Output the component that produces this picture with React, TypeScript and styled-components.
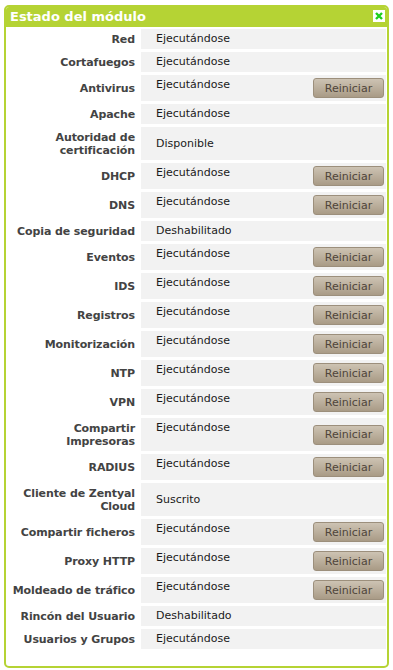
import React from "react";
import styled, { createGlobalStyle } from "styled-components";

const GlobalStyle = createGlobalStyle`
  body {
    margin: 0;
    background: #ffffff;
    font-family: "DejaVu Sans", Verdana, sans-serif;
  }
`;

const lime = "#b5d334";

const Panel = styled.div`
  margin: 5px 4px 0 4px;
  width: 385px;
  height: 663px;
  box-sizing: border-box;
  border: 2px solid ${lime};
  border-radius: 5px;
  overflow: hidden;
  background: #ffffff;
`;

const Header = styled.div`
  display: flex;
  align-items: center;
  justify-content: space-between;
  height: 20px;
  margin-top: -2px;
  padding: 1px 2px 1px 4px;
  background: ${lime};
  color: #ffffff;
  font-weight: bold;
  font-size: 13px;
`;

const CloseBox = styled.span`
  display: flex;
  align-items: center;
  justify-content: center;
  width: 12px;
  height: 12px;
  background: #ffffff;
`;

const Grid = styled.div`
  display: grid;
  grid-template-columns: 129px 1fr;
  column-gap: 4px;
  row-gap: 3px;
  padding: 2px 1px 0 2px;
`;

const Label = styled.div`
  display: flex;
  align-items: center;
  justify-content: flex-end;
  text-align: right;
  padding: 3.5px 2px 3.5px 0;
  font-size: 11px;
  line-height: 13px;
  letter-spacing: -0.1px;
  font-weight: bold;
  color: #434343;
`;

const Value = styled.div`
  display: flex;
  align-items: center;
  justify-content: space-between;
  padding: 3px 2px 3px 15px;
  background: #f2f2f2;
  font-size: 11px;
  line-height: 14px;
  color: #1a1a1a;
`;

const Status = styled.span<{ $top: boolean }>`
  align-self: ${(p) => (p.$top ? "flex-start" : "center")};
`;

const RestartBtn = styled.button`
  width: 71px;
  height: 20px;
  padding: 0;
  border: 1px solid #9c8f7c;
  border-radius: 3px;
  background: linear-gradient(#cdc3b3, #a99b86);
  color: #4f453a;
  font-family: "DejaVu Sans", Verdana, sans-serif;
  font-size: 11px;
`;

type Mod = { name: React.ReactNode; status: string; restart?: boolean };

const modules: Mod[] = [
  { name: "Red", status: "Ejecutándose" },
  { name: "Cortafuegos", status: "Ejecutándose" },
  { name: "Antivirus", status: "Ejecutándose", restart: true },
  { name: "Apache", status: "Ejecutándose" },
  { name: <>Autoridad de<br />certificación</>, status: "Disponible" },
  { name: "DHCP", status: "Ejecutándose", restart: true },
  { name: "DNS", status: "Ejecutándose", restart: true },
  { name: "Copia de seguridad", status: "Deshabilitado" },
  { name: "Eventos", status: "Ejecutándose", restart: true },
  { name: "IDS", status: "Ejecutándose", restart: true },
  { name: "Registros", status: "Ejecutándose", restart: true },
  { name: "Monitorización", status: "Ejecutándose", restart: true },
  { name: "NTP", status: "Ejecutándose", restart: true },
  { name: "VPN", status: "Ejecutándose", restart: true },
  { name: <>Compartir<br />Impresoras</>, status: "Ejecutándose", restart: true },
  { name: "RADIUS", status: "Ejecutándose", restart: true },
  { name: <>Cliente de Zentyal<br />Cloud</>, status: "Suscrito" },
  { name: "Compartir ficheros", status: "Ejecutándose", restart: true },
  { name: "Proxy HTTP", status: "Ejecutándose", restart: true },
  { name: "Moldeado de tráfico", status: "Ejecutándose", restart: true },
  { name: "Rincón del Usuario", status: "Deshabilitado" },
  { name: "Usuarios y Grupos", status: "Ejecutándose" },
];

export default function App() {
  return (
    <>
      <GlobalStyle />
      <Panel>
        <Header>
          <span>Estado del módulo</span>
          <CloseBox>
            <svg width="10" height="10" viewBox="0 0 10 10">
              <path d="M2 2 L8 8 M8 2 L2 8" stroke="#1ecf1e" strokeWidth="2.4" />
            </svg>
          </CloseBox>
        </Header>
        <Grid>
          {modules.map((m, i) => (
            <React.Fragment key={i}>
              <Label>{m.name}</Label>
              <Value>
                <Status $top={!!m.restart}>{m.status}</Status>
                {m.restart && <RestartBtn>Reiniciar</RestartBtn>}
              </Value>
            </React.Fragment>
          ))}
        </Grid>
      </Panel>
    </>
  );
}
